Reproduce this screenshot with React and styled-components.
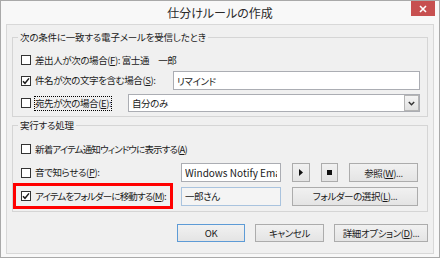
import React from "react";
import styled, { createGlobalStyle } from "styled-components";

const GlobalStyle = createGlobalStyle`
  html, body {
    margin: 0;
    padding: 0;
    background: #ffffff;
  }
`;

const Window = styled.div`
  width: 440px;
  height: 258px;
  box-sizing: border-box;
  border: 1px solid #a9a9a9;
  background: #f8f8f8;
  display: flex;
  flex-direction: column;
  font-family: "Noto Sans CJK JP", "Noto Sans", sans-serif;
  font-feature-settings: "palt";
  font-size: 9.5px;
  letter-spacing: -0.4px;
  color: #1a1a1a;
`;

const TitleBar = styled.div`
  height: 23px;
  flex: none;
  display: grid;
  grid-template-columns: 1fr auto 1fr;
  align-items: start;
`;

const Title = styled.div`
  grid-column: 2;
  font-size: 12px;
  letter-spacing: 0;
  line-height: 24px;
  color: #2a2a2a;
`;

const CloseButton = styled.button`
  grid-column: 3;
  justify-self: end;
  margin-right: 4px;
  width: 24px;
  height: 15px;
  padding: 0;
  border: 0;
  background: #c75050;
  display: flex;
  align-items: center;
  justify-content: center;
`;

const Client = styled.div`
  flex: 1;
  margin: 0 5px 3px 5px;
  border: 1px solid #d8d8d8;
  background: #f0f0f0;
  padding: 5px 5px 0;
  display: flex;
  flex-direction: column;
`;

const Group = styled.fieldset`
  margin: ${(p) => p.$mt || 0}px 0 0;
  padding: ${(p) => p.$pt}px 7px ${(p) => p.$pb}px 8px;
  border: 1px solid #d5d5d5;
  min-width: 0;
`;

const Legend = styled.legend`
  margin-left: -3px;
  padding: 0 2px;
  line-height: 14px;
  letter-spacing: -0.2px;
`;

const Row = styled.div`
  display: flex;
  align-items: center;
  height: ${(p) => p.$h || 18}px;
  margin-top: ${(p) => p.$mt || 0}px;
`;

const Option = styled.label`
  display: flex;
  align-items: center;
  flex: none;
  width: ${(p) => (p.$w ? `${p.$w}px` : "auto")};
  white-space: nowrap;
`;

const Box = styled.span`
  width: 10px;
  height: 10px;
  box-sizing: border-box;
  border: 1px solid #333333;
  background: #ffffff;
  margin-right: 4px;
  flex: none;
  display: flex;
  align-items: center;
  justify-content: center;
`;

const Caption = styled.span`
  line-height: 13px;
  letter-spacing: ${(p) => (p.$tight ? "-0.85px" : "inherit")};
  outline: ${(p) => (p.$focus ? "1px dotted #000" : "none")};
  outline-offset: 0;
`;

const Plain = styled.span`
  white-space: pre;
`;

const TextBox = styled.input`
  box-sizing: border-box;
  height: 19px;
  width: ${(p) => (p.$w ? `${p.$w}px` : "auto")};
  flex: ${(p) => (p.$w ? "none" : "1")};
  min-width: 0;
  margin: 0 0 0 ${(p) => p.$ml || 0}px;
  padding: 0 3px;
  border: 1px solid ${(p) => (p.$muted ? "#a9c3de" : "#abadb3")};
  background: ${(p) => (p.$muted ? "#f4f4f4" : "#ffffff")};
  font: inherit;
  font-size: ${(p) => (p.$latin ? "10px" : "inherit")};
  letter-spacing: ${(p) => (p.$latin ? "0" : "inherit")};
  font-feature-settings: "palt";
  color: #1a1a1a;
  outline: none;
`;

const Select = styled.div`
  flex: 1;
  box-sizing: border-box;
  height: 18px;
  border: 1px solid #abadb3;
  background: #ffffff;
  display: flex;
  align-items: stretch;
`;

const SelectValue = styled.span`
  flex: 1;
  padding-left: 3px;
  line-height: 16px;
`;

const DropButton = styled.span`
  width: 15px;
  box-sizing: border-box;
  border: 1px solid #b5b5b5;
  background: linear-gradient(#f4f4f4, #e1e1e1);
  display: flex;
  align-items: center;
  justify-content: center;
`;

const Button = styled.button`
  box-sizing: border-box;
  height: ${(p) => p.$h || 19}px;
  width: ${(p) => p.$w}px;
  flex: none;
  margin-left: ${(p) => p.$ml || 0}px;
  padding: 0;
  border: 1px solid ${(p) => (p.$default ? "#5d9bd6" : "#acacac")};
  background: linear-gradient(#f1f1f1, #e4e4e4);
  font: inherit;
  font-feature-settings: "palt";
  letter-spacing: inherit;
  color: #1a1a1a;
  display: flex;
  align-items: center;
  justify-content: center;
`;

const Highlight = styled.div`
  box-sizing: border-box;
  width: 160px;
  height: 26px;
  margin-left: -8px;
  padding: 0 5px;
  border: 3px solid #ff0000;
  display: flex;
  align-items: center;
  flex: none;
`;

const ButtonBar = styled.div`
  margin-top: 12px;
  display: flex;
  justify-content: flex-end;
  gap: 10px;
`;

const Check = () => (
  <svg width="8" height="8" viewBox="0 0 8 8">
    <path d="M1 4.2 L3 6.3 L7 1.4" fill="none" stroke="#1a1a1a" strokeWidth="1.5" />
  </svg>
);

const CheckOption = ({ checked, w, focus, tight, children }) => (
  <Option $w={w}>
    <Box>{checked && <Check />}</Box>
    <Caption $focus={focus} $tight={tight}>
      {children}
    </Caption>
  </Option>
);

export default function App() {
  return (
    <>
      <GlobalStyle />
      <Window>
        <TitleBar>
          <Title>仕分けルールの作成</Title>
          <CloseButton aria-label="閉じる">
            <svg width="8" height="8" viewBox="0 0 8 8">
              <path d="M1 1 L7 7 M7 1 L1 7" stroke="#ffffff" strokeWidth="1.6" />
            </svg>
          </CloseButton>
        </TitleBar>
        <Client>
          <Group $pt={7} $pb={4}>
            <Legend>次の条件に一致する電子メールを受信したとき</Legend>
            <Row>
              <CheckOption>
                差出人が次の場合(<u>F</u>):
              </CheckOption>
              <Plain> 富士通　一郎</Plain>
            </Row>
            <Row $h={19} $mt={2}>
              <CheckOption checked w={152}>
                件名が次の文字を含む場合(<u>S</u>):
              </CheckOption>
              <TextBox defaultValue="リマインド" />
            </Row>
            <Row $mt={4}>
              <CheckOption w={107} focus>
                宛先が次の場合(<u>E</u>):
              </CheckOption>
              <Select>
                <SelectValue>自分のみ</SelectValue>
                <DropButton>
                  <svg width="7" height="5" viewBox="0 0 7 5">
                    <path d="M0.8 1 L3.5 3.8 L6.2 1" fill="none" stroke="#333" strokeWidth="1.4" />
                  </svg>
                </DropButton>
              </Select>
            </Row>
          </Group>

          <Group $mt={1} $pt={8} $pb={2}>
            <Legend>実行する処理</Legend>
            <Row>
              <CheckOption tight>
                新着アイテム通知ウィンドウに表示する(<u>A</u>)
              </CheckOption>
            </Row>
            <Row $h={19} $mt={5}>
              <CheckOption w={160}>
                音で知らせる(<u>P</u>):
              </CheckOption>
              <TextBox $w={100} $latin defaultValue="Windows Notify Email.wav" />
              <Button $w={18} $ml={11} aria-label="再生">
                <svg width="4" height="7" viewBox="0 0 4 7">
                  <path d="M0 0 L4 3.5 L0 7 Z" fill="#111" />
                </svg>
              </Button>
              <Button $w={17} $ml={11} aria-label="停止">
                <svg width="5" height="5" viewBox="0 0 5 5">
                  <rect width="5" height="5" fill="#111" />
                </svg>
              </Button>
              <Button $w={69} $ml={11}>
                参照(<u>W</u>)...
              </Button>
            </Row>
            <Row $h={26} $mt={1}>
              <Highlight>
                <CheckOption checked tight>
                  アイテムをフォルダーに移動する(<u>M</u>):
                </CheckOption>
              </Highlight>
              <TextBox $w={100} $ml={8} $muted defaultValue="一郎さん" />
              <Button $w={126} $ml={11}>
                フォルダーの選択(<u>L</u>)...
              </Button>
            </Row>
          </Group>

          <ButtonBar>
            <Button $w={68} $h={18} $default>
              OK
            </Button>
            <Button $w={69} $h={18}>
              キャンセル
            </Button>
            <Button $w={94} $h={18}>
              詳細オプション(<u>D</u>)...
            </Button>
          </ButtonBar>
        </Client>
      </Window>
    </>
  );
}
